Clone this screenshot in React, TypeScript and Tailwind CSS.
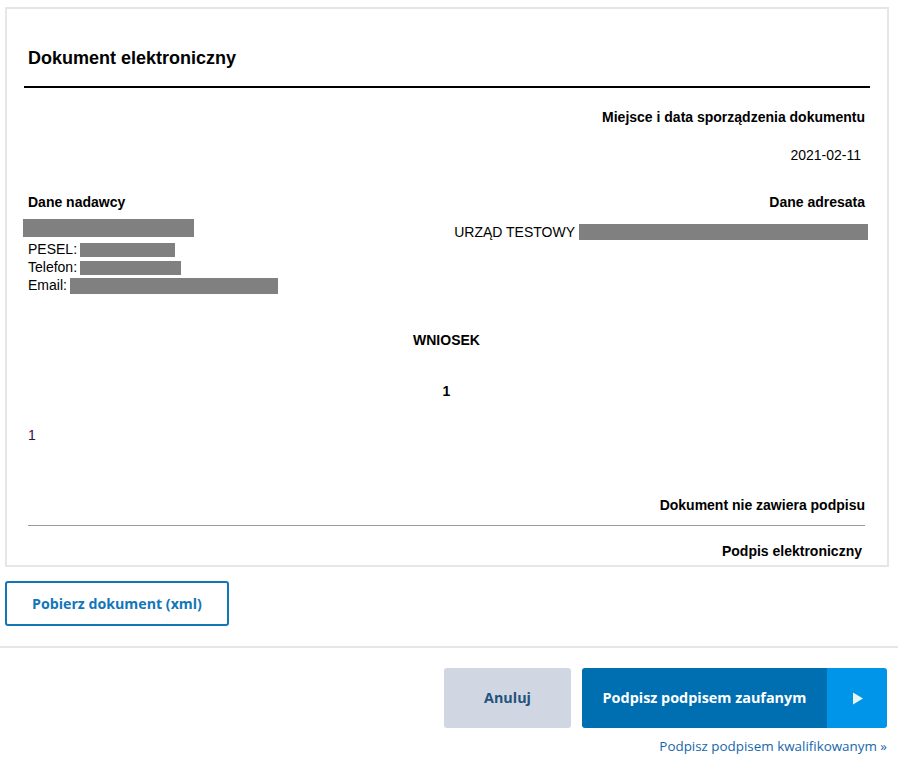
import * as React from "react"

const doc = "font-['Liberation_Sans',Arial,sans-serif] text-[14px] leading-[18px] text-black"
const ui = "font-['Open_Sans',Arial,sans-serif]"

function Redacted({ className }: { className: string }) {
  return <span className={`inline-block bg-[#808080] align-middle ${className}`} />
}

export default function App() {
  return (
    <div className="w-[898px] h-[757px] bg-white overflow-hidden">
      <div className="pt-[7px] pl-[5px] pr-[9px]">
        <div className="h-[560px] border-2 border-[#e6e6e6] overflow-hidden">
          <div className="px-[17px]">
            <h1 className="pt-[38px] font-['Liberation_Sans',Arial,sans-serif] text-[18px] leading-[22px] font-bold text-black pl-[4px]">
              Dokument elektroniczny
            </h1>
            <div className="mt-[17px] h-[2px] bg-black" />

            <div className={`${doc} pl-[4px] pr-[5px]`}>
              <p className="mt-[20px] text-right font-bold">Miejsce i data sporządzenia dokumentu</p>
              <p className="mt-[20px] text-right pr-[4px]">2021-02-11</p>

              <div className="mt-[29px] flex justify-between">
                <div className="flex flex-col">
                  <p className="font-bold">Dane nadawcy</p>
                  <Redacted className="mt-[8px] -ml-[5px] w-[171px] h-[18px]" />
                  <p className="mt-[3px]">
                    PESEL: <Redacted className="w-[95px] h-[14px] -ml-[1px]" />
                  </p>
                  <p>
                    Telefon: <Redacted className="w-[101px] h-[14px] -ml-[1px]" />
                  </p>
                  <p>
                    Email: <Redacted className="w-[208px] h-[16px] -ml-[1px]" />
                  </p>
                </div>
                <div className="flex flex-col items-end">
                  <p className="font-bold">Dane adresata</p>
                  <p className="mt-[12px] -mr-[3px] flex items-center gap-[4px]">
                    URZĄD TESTOWY <Redacted className="w-[289px] h-[16px]" />
                  </p>
                </div>
              </div>

              <p className="mt-[37px] text-center font-bold">WNIOSEK</p>
              <p className="mt-[33px] text-center font-bold">1</p>
              <p className="mt-[26px] text-[#3a0c44]">1</p>

              <p className="mt-[52px] text-right font-bold">Dokument nie zawiera podpisu</p>
              <div className="mt-[11px] h-px bg-[#9a9a9a]" />
              <p className="mt-[16px] text-right font-bold pr-[3px]">Podpis elektroniczny</p>
            </div>
          </div>
        </div>

        <button
          className={`${ui} mt-[14px] w-[224px] h-[45px] rounded-[3px] border-2 border-[#1276b9] bg-white text-[14.2px] font-bold text-[#1276b9]`}
        >
          Pobierz dokument (xml)
        </button>
      </div>

      <div className="mt-[20px] h-[2px] bg-[#e6e6e6]" />

      <div className="pr-[11px]">
        <div className="mt-[20px] flex justify-end gap-[11px]">
          <button
            className={`${ui} w-[127px] h-[60px] rounded-[3px] bg-[#d0d7e3] text-[14.3px] font-bold text-[#23527c]`}
          >
            Anuluj
          </button>
          <button className={`${ui} flex w-[305px] h-[60px] rounded-[3px] overflow-hidden text-[14.4px] font-bold text-white`}>
            <span className="flex flex-1 items-center justify-center bg-[#006fb1]">Podpisz podpisem zaufanym</span>
            <span className="flex w-[60px] items-center justify-center bg-[#0095e8]">
              <svg width="12" height="13" viewBox="0 0 12 13" className="ml-[2px]">
                <path d="M1 0.5 L11 6.5 L1 12.5 Z" fill="#e6f5f0" />
              </svg>
            </span>
          </button>
        </div>
        <div className={`${ui} mt-[9px] text-right text-[13.4px] leading-[18px]`}>
          <a className="text-[#1667aa]">Podpisz podpisem kwalifikowanym »</a>
        </div>
      </div>
    </div>
  )
}
